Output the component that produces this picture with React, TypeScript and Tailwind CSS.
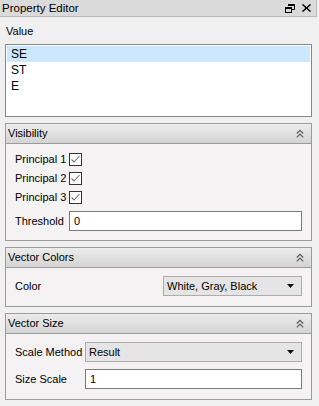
import React from "react"

const font = { fontFamily: '"Liberation Sans", Arial, sans-serif' }

function Chevrons() {
  return (
    <svg width="8" height="9" viewBox="0 0 8 9" className="text-[#5a5a5a]">
      <path d="M0.8 4.5 L4 1.3 L7.2 4.5" fill="none" stroke="currentColor" strokeWidth="1.2" />
      <path d="M0.8 8.3 L4 5.1 L7.2 8.3" fill="none" stroke="currentColor" strokeWidth="1.2" />
    </svg>
  )
}

function Check() {
  return (
    <div className="flex h-[13px] w-[13px] items-center justify-center border border-[#333] bg-white">
      <svg width="11" height="11" viewBox="0 0 11 11">
        <path d="M1.5 5.5 L4 8 L9.5 2" fill="none" stroke="#6f6f6f" strokeWidth="1.1" />
      </svg>
    </div>
  )
}

function Arrow() {
  return (
    <svg width="7" height="4" viewBox="0 0 7 4">
      <path d="M0 0 H7 L3.5 4 Z" fill="#111" />
    </svg>
  )
}

function Group({ title, children }: { title: string; children: React.ReactNode }) {
  return (
    <div className="w-[307px] border border-[#9c9c9c]">
      <div className="flex h-[20px] items-center justify-between border-b border-[#9c9c9c] bg-gradient-to-b from-[#ececec] to-[#d4d4d4] pl-[2px] pr-[7px]">
        <span>{title}</span>
        <Chevrons />
      </div>
      <div className="bg-[#f4f2f2]">{children}</div>
    </div>
  )
}

function Combo({ text, w }: { text: string; w: string }) {
  return (
    <div className={`flex h-[20px] items-center justify-between border border-[#acacac] bg-[#e5e5e5] pl-[3px] pr-[7px] ${w}`}>
      <span>{text}</span>
      <Arrow />
    </div>
  )
}

function Input({ value, w }: { value: string; w: string }) {
  return (
    <div className={`flex h-[20px] items-center border border-[#7a7a7a] bg-white pl-[4px] ${w}`}>{value}</div>
  )
}

export default function App() {
  const items = ["SE", "ST", "E"]
  return (
    <div className="h-[406px] w-[319px] overflow-hidden bg-[#f0f0f0] text-[11px] leading-[13px] text-black" style={font}>
      <div className="flex h-[17px] w-[317px] items-center justify-between border-b border-r border-[#b9b9b9] bg-[#dadada] pl-[2px] pr-[5px] text-[11.5px]">
        <span>Property Editor</span>
        <div className="flex items-center gap-[7px]">
          <svg width="10" height="9" viewBox="0 0 10 9">
            <path d="M3 0.5 H9.5 V5.5 H7" fill="none" stroke="#000" strokeWidth="1" />
            <path d="M3 1 H9.5" stroke="#000" strokeWidth="2" />
            <rect x="0.5" y="3.5" width="6" height="5" fill="none" stroke="#000" strokeWidth="1" />
            <path d="M0.5 4 H6.5" stroke="#000" strokeWidth="2" />
          </svg>
          <svg width="9" height="8" viewBox="0 0 9 8">
            <path d="M0.5 0.5 L8.5 7.5 M8.5 0.5 L0.5 7.5" stroke="#000" strokeWidth="1.5" />
          </svg>
        </div>
      </div>

      <div className="flex flex-col pl-[5px]">
        <div className="pt-[8px] pl-[1px]">Value</div>
        <div className="mt-[6px] h-[73px] w-[307px] border border-[#828790] bg-white p-[1px]">
          {items.map((it, i) => (
            <div key={it} className={`flex h-[16px] items-center pl-[4px] text-[12px] ${i === 0 ? "bg-[#cce8ff]" : ""}`}>
              {it}
            </div>
          ))}
        </div>

        <div className="mt-[6px] flex flex-col gap-[6px]">
          <Group title="Visibility">
            <div className="flex flex-col px-[9px] pt-[6px] pb-[9px]">
              {["Principal 1", "Principal 2", "Principal 3"].map((p) => (
                <div key={p} className="flex h-[19px] items-center">
                  <span className="w-[54px]">{p}</span>
                  <Check />
                </div>
              ))}
              <div className="mt-[4px] flex items-center">
                <span className="w-[54px]">Threshold</span>
                <Input value="0" w="w-[233px]" />
              </div>
            </div>
          </Group>

          <Group title="Vector Colors">
            <div className="flex items-center justify-between pl-[9px] pr-[9px] pt-[8px] pb-[10px]">
              <span>Color</span>
              <Combo text="White, Gray, Black" w="w-[139px]" />
            </div>
          </Group>

          <Group title="Vector Size">
            <div className="flex flex-col gap-[7px] px-[9px] pt-[8px] pb-[10px]">
              <div className="flex items-center">
                <span className="w-[70px]">Scale Method</span>
                <Combo text="Result" w="w-[217px]" />
              </div>
              <div className="flex items-center">
                <span className="w-[70px]">Size Scale</span>
                <Input value="1" w="w-[217px]" />
              </div>
            </div>
          </Group>
        </div>
      </div>
    </div>
  )
}
